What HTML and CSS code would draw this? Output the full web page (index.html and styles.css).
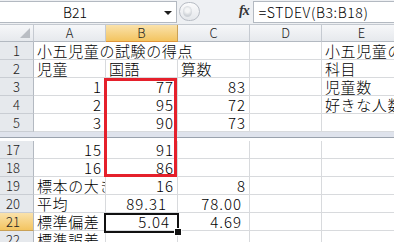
FILE: index.html
```html
<!DOCTYPE html>
<html>
<head>
<meta charset="utf-8">
<link rel="stylesheet" href="styles.css">
</head>
<body>
<div class="app">
  <div class="fbar">
    <div class="namebox">
      <span class="nb-text">B21</span>
      <svg class="dd" width="8" height="4" viewBox="0 0 8 4"><path d="M0 0H8L4 4Z" fill="#1e1e1e"/></svg>
    </div>
    <div class="knob"><span class="knob-in"></span></div>
    <div class="fx">fx</div>
    <div class="formula">=STDEV(B3:B18)</div>
  </div>
  <div class="sheet">
    <div class="corner"><svg class="tri" width="10" height="10" viewBox="0 0 10 10"><path d="M10 0V10H0Z" fill="#b9bdc3"/></svg></div>
    <div class="ch">A</div><div class="ch sel">B</div><div class="ch">C</div><div class="ch">D</div><div class="ch">E</div>

    <div class="rh">1</div><div class="c span3">小五児童の試験の得点</div><div class="c"></div><div class="c">小五児童の</div>
    <div class="rh">2</div><div class="c">児童</div><div class="c">国語</div><div class="c">算数</div><div class="c"></div><div class="c">科目</div>
    <div class="rh">3</div><div class="c n">1</div><div class="c n">77</div><div class="c n">83</div><div class="c"></div><div class="c">児童数</div>
    <div class="rh">4</div><div class="c n">2</div><div class="c n">95</div><div class="c n">72</div><div class="c"></div><div class="c">好きな人数</div>
    <div class="rh">5</div><div class="c n">3</div><div class="c n">90</div><div class="c n">73</div><div class="c"></div><div class="c"></div>
    <div class="band"></div>
    <div class="rh">17</div><div class="c n">15</div><div class="c n">91</div><div class="c"></div><div class="c"></div><div class="c"></div>
    <div class="rh">18</div><div class="c n">16</div><div class="c n">86</div><div class="c"></div><div class="c"></div><div class="c"></div>
    <div class="rh">19</div><div class="c">標本の大き</div><div class="c n">16</div><div class="c n">8</div><div class="c"></div><div class="c"></div>
    <div class="rh">20</div><div class="c">平均</div><div class="c n fb20">89.31</div><div class="c n fc">78.00</div><div class="c"></div><div class="c"></div>
    <div class="rh sel">21</div><div class="c">標準偏差</div><div class="c n fb21">5.04</div><div class="c n fc">4.69</div><div class="c"></div><div class="c"></div>
    <div class="rh">22</div><div class="c">標準誤差</div><div class="c"></div><div class="c"></div><div class="c"></div><div class="c"></div>
  </div>
  <div class="redbox"></div>
  <div class="selbox"><span class="handle"></span></div>
</div>
</body>
</html>
```

FILE: styles.css
```css
html, body {
  margin: 0;
  padding: 0;
}
body {
  width: 394px;
  height: 242px;
  overflow: hidden;
  background: #fff;
  font-family: "Noto Sans CJK JP", "Noto Sans", sans-serif;
  font-weight: 300;
  color: #000;
}
.app {
  position: relative;
  width: 394px;
  height: 242px;
  overflow: hidden;
}
.fbar {
  box-sizing: border-box;
  height: 25px;
  display: flex;
  align-items: flex-start;
  background: #eef0f3;
  border-bottom: 1px solid #c4c9d0;
}
.namebox {
  box-sizing: border-box;
  margin-top: 1px;
  width: 177px;
  height: 22px;
  background: #fff;
  border: 1px solid #b3b9c1;
  border-left: none;
  display: flex;
  align-items: center;
}
.nb-text {
  width: 150px;
  text-align: center;
  font-size: 14px;
  line-height: 20px;
}
.dd {
  margin-left: 14px;
  margin-top: 1px;
}
.knob {
  box-sizing: border-box;
  margin: 2px 0 0 2px;
  width: 21px;
  height: 19px;
  border-radius: 10px;
  border: 1px solid #b7bcc4;
  background: linear-gradient(#fbfbfc, #e4e7eb);
  display: flex;
  align-items: center;
  padding-left: 3px;
}
.knob-in {
  width: 9px;
  height: 11px;
  border-radius: 50%;
  background: radial-gradient(circle at 50% 40%, #f4f5f6 0 2px, #cfd3d8 5px);
}
.fx {
  margin-left: 39px;
  margin-top: 3px;
  font-family: "Liberation Serif", serif;
  font-style: italic;
  font-weight: bold;
  font-size: 14px;
  line-height: 16px;
  color: #333;
  letter-spacing: -1px;
}
.formula {
  box-sizing: border-box;
  margin: 1px 0 0 4px;
  flex: 1;
  height: 22px;
  background: #fff;
  border: 1px solid #b3b9c1;
  border-right: none;
  padding-left: 5px;
  font-size: 14px;
  line-height: 20px;
  letter-spacing: 0.6px;
}
.sheet {
  display: grid;
  grid-template-columns: 34px 72px 72px 72px 72px 80px;
  grid-template-rows: 17px repeat(5, 18px) 9px repeat(6, 18px);
}
.corner, .ch {
  box-sizing: border-box;
  background: linear-gradient(#f6f7f9, #e6e9ed);
  border-right: 1px solid #c5cad1;
  border-bottom: 1px solid #b3b9c1;
}
.corner {
  display: flex;
  justify-content: flex-end;
  align-items: flex-end;
  padding: 0 3px 3px 0;
}
.ch {
  text-align: center;
  font-size: 13px;
  line-height: 16px;
  color: #222;
}
.ch.sel {
  background: linear-gradient(#fae2ab, #f3c460);
  border-right-color: #c9a157;
  border-bottom: 1px solid #e0973a;
}
.rh {
  box-sizing: border-box;
  background: #e6e9ed;
  border-right: 1px solid #b3b9c1;
  border-bottom: 1px solid #c9cdd3;
  text-align: right;
  padding-right: 13px;
  font-size: 13px;
  line-height: 18px;
  color: #222;
}
.rh.sel {
  background: linear-gradient(#fae2ab, #f3c460);
  border-bottom-color: #c9a157;
}
.c {
  box-sizing: border-box;
  border-right: 1px solid #d8dadd;
  border-bottom: 1px solid #d8dadd;
  padding: 0 2px 0 3px;
  font-size: 15px;
  line-height: 17px;
  letter-spacing: 0.6px;
  white-space: nowrap;
  overflow: hidden;
}
.c.span3 {
  grid-column: span 3;
}
.c.n {
  text-align: right;
  padding-right: 3px;
  letter-spacing: 1px;
}
.c.fb20 { padding-right: 10px; }
.c.fb21 { padding-right: 7px; }
.c.fc { padding-right: 7px; }
.band {
  grid-column: 1 / -1;
  box-sizing: border-box;
  background: #fff;
  border-top: 5px solid #dfe3ec;
  border-bottom: 2px solid #fff;
}
.band::after {
  content: "";
  display: block;
  height: 1px;
  background: #9aa2ad;
}
.redbox {
  position: absolute;
  left: 104px;
  top: 78px;
  width: 73px;
  height: 99px;
  box-sizing: border-box;
  border: 3px solid #e5202b;
}
.selbox {
  position: absolute;
  left: 104px;
  top: 213px;
  width: 75px;
  height: 20px;
  box-sizing: border-box;
  border: 2px solid #111;
}
.handle {
  position: absolute;
  right: -5px;
  bottom: -5px;
  width: 6px;
  height: 6px;
  background: #111;
  border: 1px solid #fff;
}
```
